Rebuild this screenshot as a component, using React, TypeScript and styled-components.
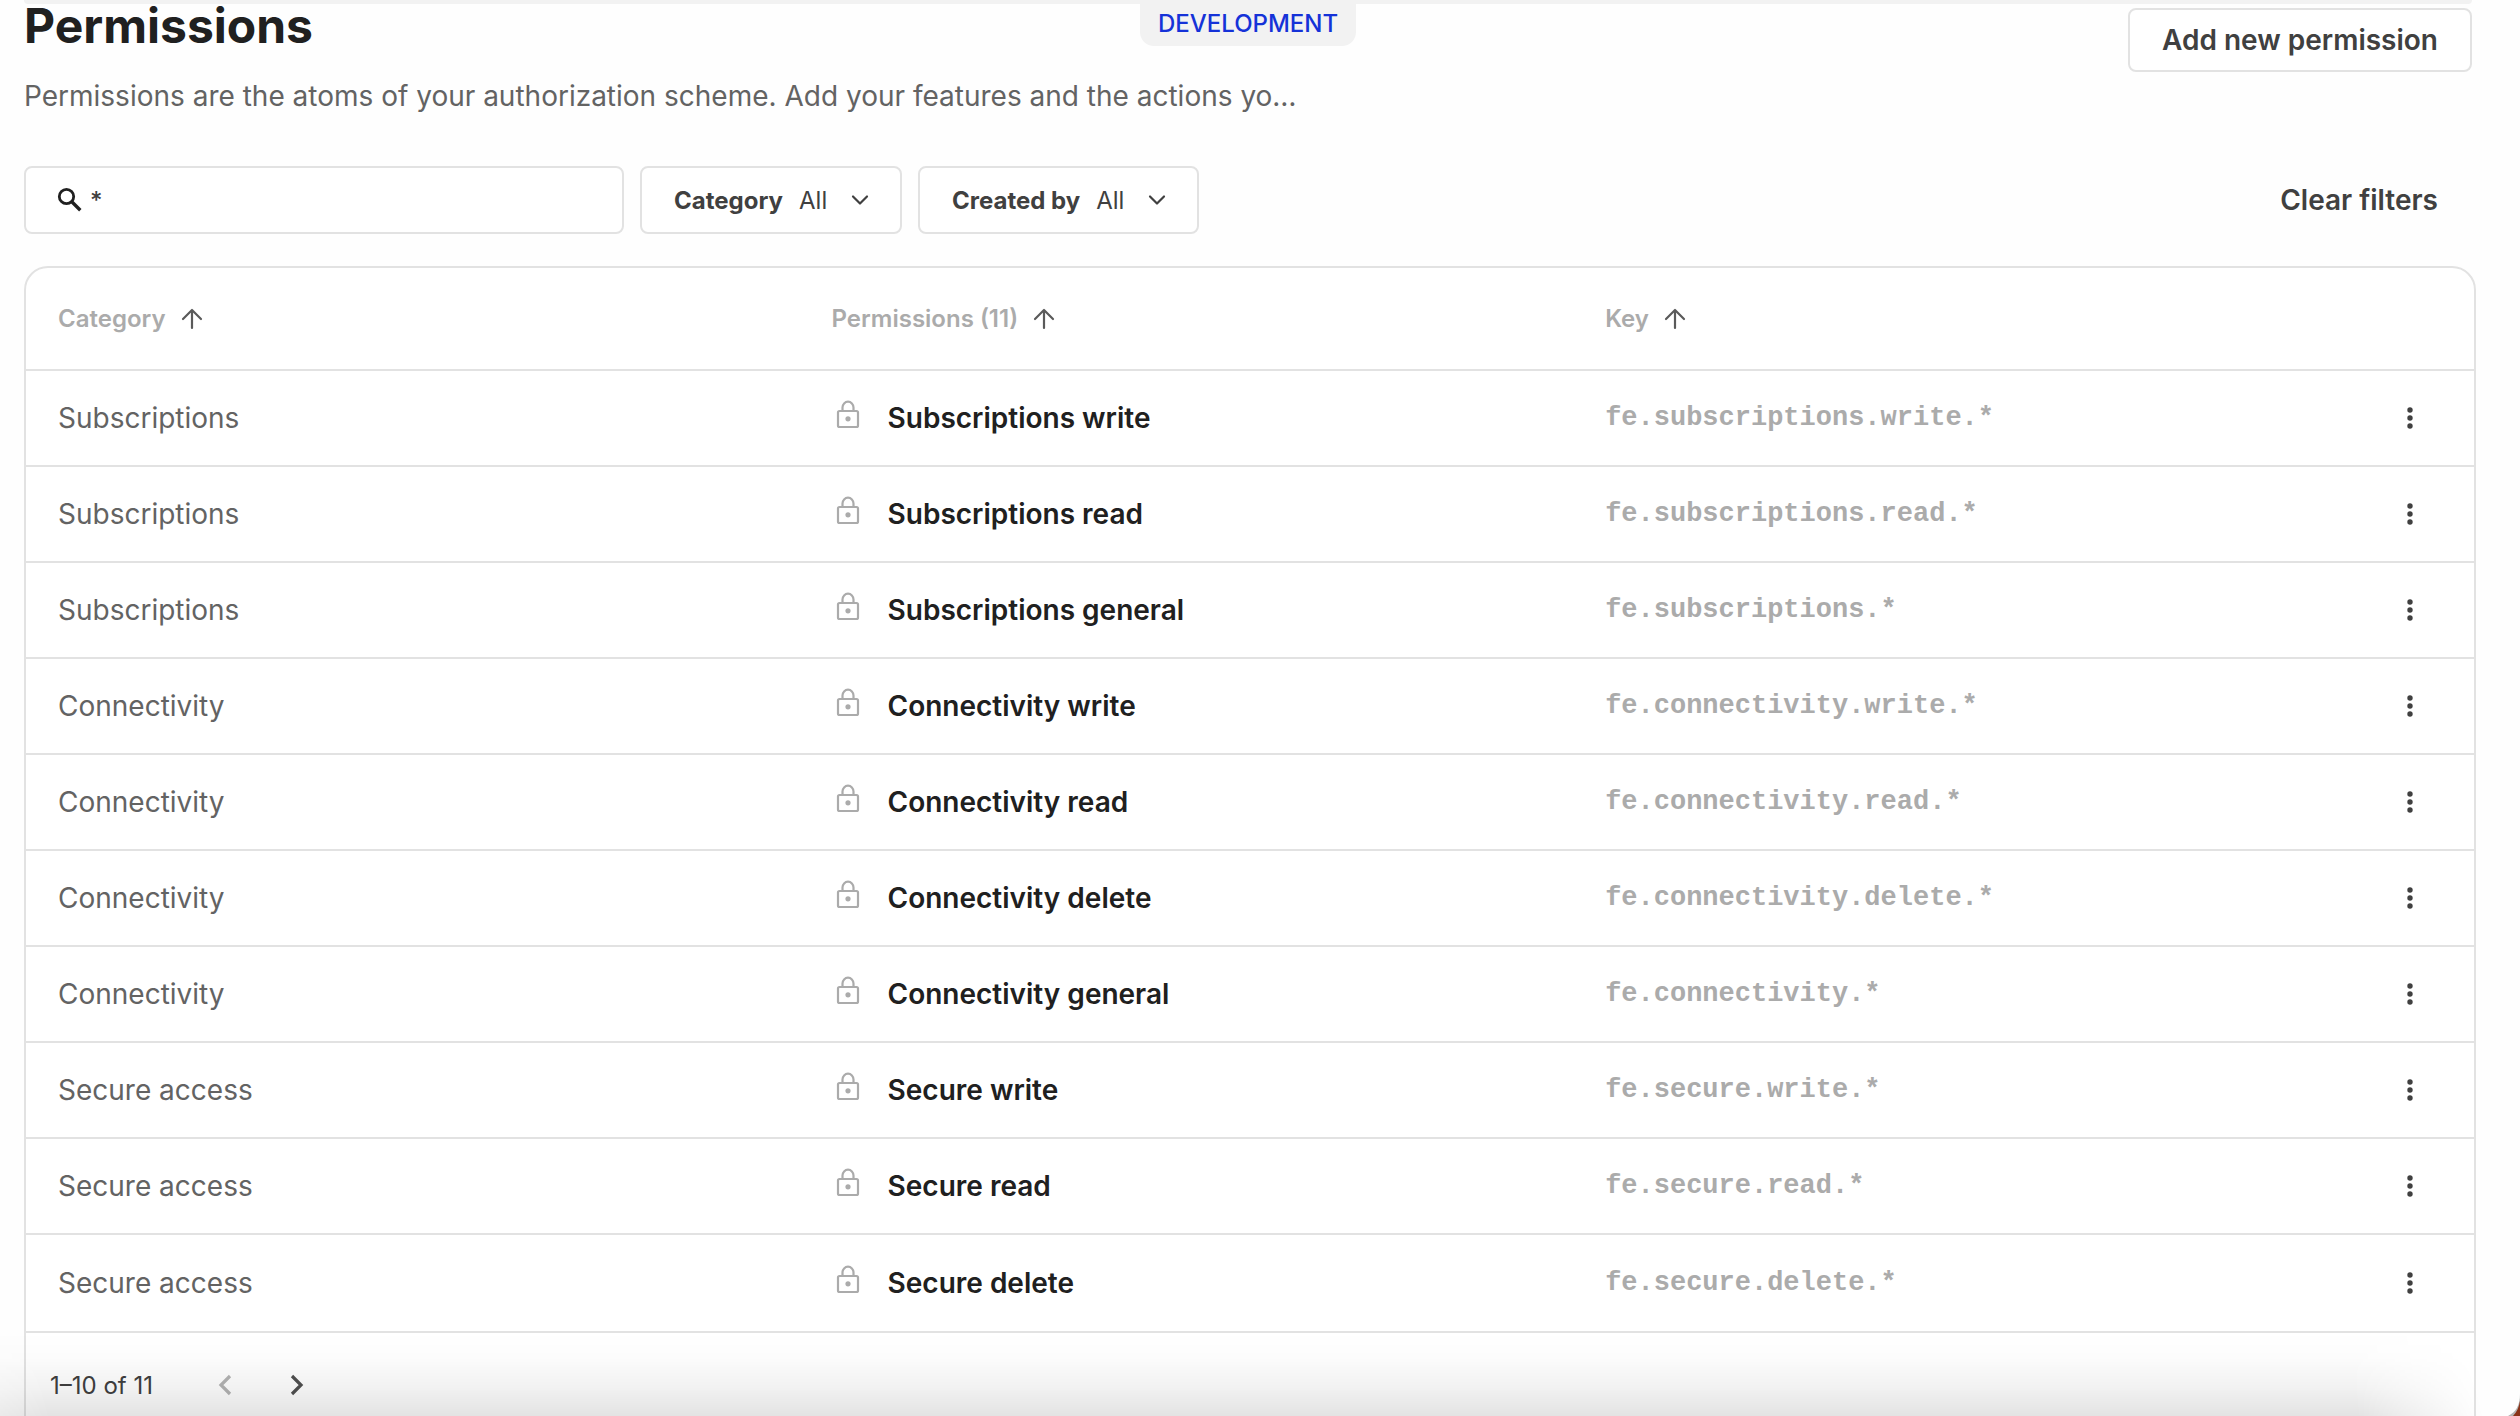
import React, { useState } from "react";
import styled, { createGlobalStyle } from "styled-components";

const Global = createGlobalStyle`
  *, *::before, *::after { box-sizing: border-box; }
  body { margin: 0; background: #fff; overflow: hidden; }
  body, button, input, select { font-family: Inter, "Open Sans", sans-serif; }
  button { cursor: pointer; }
`;

const Page = styled.main`
  position: relative;
  height: 100vh;
  overflow: hidden;
  background: #fefefe;
  padding: 0 44px 0 24px;
`;
const TopBar = styled.div`
  height: 4px;
  margin-right: 4px;
  background: #f2f2f2;
  border-radius: 0 0 8px 8px;
`;
const Environment = styled.div`
  position: absolute;
  top: 0;
  left: 1140px;
  padding: 10px 18px 8px;
  border-radius: 0 0 14px 14px;
  background: #f2f2f2;
  color: #1532d8;
  font-size: 24px;
  line-height: 28px;
  font-weight: 500;
`;
const Header = styled.header`
  display: flex;
  justify-content: space-between;
  align-items: flex-start;
  padding-right: 4px;
`;
const Intro = styled.div`
  display: flex;
  flex-direction: column;
  gap: 24px;
`;
const Title = styled.h1`
  margin: -4px 0 0;
  font-size: 48px;
  line-height: 52px;
  font-weight: 700;
  color: #202020;
`;
const Subtitle = styled.p`
  margin: 0;
  font-size: 28px;
  line-height: 40px;
  color: #636363;
`;
const OutlineButton = styled.button`
  height: 64px;
  margin-top: 4px;
  padding: 0 32px;
  border: 2px solid #e2e2e2;
  border-radius: 8px;
  background: #fff;
  color: #404040;
  font-size: 28px;
  font-weight: 600;
`;
const TextButton = styled.button`
  margin-left: auto;
  padding: 12px 38px;
  border: 0;
  background: none;
  color: #404040;
  font-size: 28px;
  font-weight: 600;
`;
const Filters = styled.div`
  display: flex;
  align-items: center;
  gap: 16px;
  margin-top: 50px;
`;
const Field = styled.label`
  display: flex;
  align-items: center;
  height: 68px;
  border: 2px solid #e2e2e2;
  border-radius: 8px;
  background: #fff;
  color: #404040;
  font-size: 24px;
`;
const SearchField = styled(Field)`
  width: 600px;
  gap: 6px;
  padding: 0 30px;
`;
const SearchInput = styled.input`
  flex: 1;
  min-width: 0;
  border: 0;
  outline: 0;
  padding: 0;
  background: none;
  color: #404040;
  font-size: 24px;
  font-weight: 500;
`;
const SelectField = styled(Field)`
  gap: 16px;
  padding: 0 28px 0 32px;
`;
const FieldName = styled.span`
  font-weight: 700;
`;
const Select = styled.select`
  appearance: none;
  border: 0;
  outline: 0;
  padding: 0 4px 0 0;
  background: none;
  color: #404040;
  font-size: 24px;
`;
const Card = styled.section`
  margin-top: 32px;
  border: 2px solid #e2e2e2;
  border-radius: 24px;
  background: #fff;
`;
const Table = styled.table`
  width: 100%;
  table-layout: fixed;
  border-collapse: collapse;
`;
const Col = styled.col<{ $share?: string }>`
  width: ${(p) => p.$share ?? "auto"};
`;
const HeadCell = styled.th`
  height: 102px;
  padding: 0 32px;
  border-bottom: 2px solid #e2e2e2;
  text-align: left;
`;
const SortButton = styled.button`
  display: flex;
  align-items: center;
  gap: 14px;
  border: 0;
  padding: 0;
  background: none;
  color: #ababab;
  font-size: 24px;
  font-weight: 600;
`;
const Row = styled.tr`
  height: 96px;
  &:last-child { height: 98px; }
`;
const Cell = styled.td`
  padding: 0 32px;
  border-bottom: 2px solid #e2e2e2;
  font-size: 28px;
  line-height: 40px;
  color: #636363;
`;
const KeyCell = styled(Cell)`
  font-family: "Liberation Mono", monospace;
  font-size: 27px;
  font-weight: 700;
  color: #ababab;
`;
const MenuCell = styled(Cell)`
  padding: 0 40px;
`;
const Name = styled.div`
  display: flex;
  align-items: center;
  gap: 24px;
  font-weight: 600;
  color: #202020;
`;
const LockIcon = styled.svg`
  width: 32px;
  height: 32px;
  margin-bottom: 8px;
`;
const IconButton = styled.button`
  display: grid;
  place-items: center;
  width: 48px;
  height: 48px;
  padding: 0;
  border: 0;
  background: none;
  &:disabled { opacity: 0.45; }
`;
const Pager = styled.footer`
  display: flex;
  align-items: center;
  height: 104px;
  padding-left: 24px;
  color: #404040;
  font-size: 24px;
`;
const Range = styled.span`
  margin-right: 48px;
`;
const PagerButtons = styled.div`
  display: flex;
  gap: 24px;
`;
const BottomShade = styled.div`
  position: absolute;
  left: 0;
  right: 0;
  bottom: 0;
  height: 84px;
  pointer-events: none;
  background: linear-gradient(to bottom, rgba(0,0,0,0), rgba(0,0,0,0.012) 30%, rgba(0,0,0,0.05) 65%, rgba(0,0,0,0.11));
  mask-image: linear-gradient(80deg, rgba(0,0,0,0.7) 0, #000 2%, #000 93%, transparent 98%);
`;
const Corner = styled.svg`
  position: absolute;
  right: 0;
  bottom: 0;
  width: 24px;
  height: 24px;
`;

const ArrowUp = () => (
  <svg width="24" height="24" viewBox="0 0 24 24" fill="none" stroke="#5a5a5a" strokeWidth="2.2" strokeLinecap="round" strokeLinejoin="round" aria-hidden="true">
    <path d="M12 21V3M3 12l9-9 9 9" />
  </svg>
);
const Chevron = () => (
  <svg width="24" height="24" viewBox="0 0 24 24" fill="none" stroke="#404040" strokeWidth="2.2" strokeLinecap="round" strokeLinejoin="round" aria-hidden="true">
    <path d="M5 8.500l7 7 7-7" />
  </svg>
);
const Lock = () => (
  <LockIcon viewBox="0 0 32 32" fill="none" stroke="#ababab" strokeWidth="2.2" strokeLinejoin="round" aria-hidden="true">
    <rect x="6" y="13" width="20" height="16" rx="1.500" />
    <path d="M10.500 13V9.500a5.500 5.800 0 0 1 11 0v3.500" />
    <circle cx="16" cy="20.800" r="2.600" fill="#ababab" stroke="none" />
  </LockIcon>
);

const groups = [
  { category: "Subscriptions", name: "Subscriptions", key: "fe.subscriptions", actions: ["write", "read", "general"] },
  { category: "Connectivity", name: "Connectivity", key: "fe.connectivity", actions: ["write", "read", "delete", "general"] },
  { category: "Secure access", name: "Secure", key: "fe.secure", actions: ["write", "read", "delete"] },
];
const permissions = groups.flatMap((g) =>
  g.actions.map((a) => ({
    category: g.category,
    name: `${g.name} ${a}`,
    key: a === "general" ? `${g.key}.*` : `${g.key}.${a}.*`,
  })),
);
const columns = ["Category", "Permissions (11)", "Key"];
const filters = ["Category", "Created by"];

export default function App() {
  const [query, setQuery] = useState("*");
  return (
    <>
      <Global />
      <Page>
        <TopBar />
        <Environment>DEVELOPMENT</Environment>
        <Header>
          <Intro>
            <Title>Permissions</Title>
            <Subtitle>Permissions are the atoms of your authorization scheme. Add your features and the actions yo…</Subtitle>
          </Intro>
          <OutlineButton type="button">Add new permission</OutlineButton>
        </Header>
        <Filters>
          <SearchField>
            <svg width="28" height="28" viewBox="0 0 28 28" fill="none" stroke="#202020" strokeWidth="2.8" aria-hidden="true">
              <circle cx="10.500" cy="10.500" r="7.200" />
              <path d="M15.800 15.800l8.500 8.500" strokeWidth="3.4" />
            </svg>
            <SearchInput aria-label="Search permissions" value={query} onChange={(e) => setQuery(e.target.value)} />
          </SearchField>
          {filters.map((f) => (
            <SelectField key={f}>
              <FieldName>{f}</FieldName>
              <Select defaultValue="All">
                <option>All</option>
              </Select>
              <Chevron />
            </SelectField>
          ))}
          <TextButton type="button">Clear filters</TextButton>
        </Filters>
        <Card>
          <Table>
            <colgroup>
              <Col $share="31.6%" />
              <Col $share="31.6%" />
              <Col />
              <Col $share="128px" />
            </colgroup>
            <thead>
              <tr>
                {columns.map((c) => (
                  <HeadCell key={c} scope="col">
                    <SortButton type="button">
                      {c}
                      <ArrowUp />
                    </SortButton>
                  </HeadCell>
                ))}
                <HeadCell scope="col" aria-label="Actions" />
              </tr>
            </thead>
            <tbody>
              {permissions.map((p) => (
                <Row key={p.key}>
                  <Cell>{p.category}</Cell>
                  <Cell>
                    <Name>
                      <Lock />
                      {p.name}
                    </Name>
                  </Cell>
                  <KeyCell>{p.key}</KeyCell>
                  <MenuCell>
                    <IconButton type="button" aria-label={`Actions for ${p.name}`}>
                      <svg width="24" height="24" viewBox="0 0 24 24" fill="#404040" aria-hidden="true">
                        <circle cx="12" cy="4" r="2.700" />
                        <circle cx="12" cy="12" r="2.700" />
                        <circle cx="12" cy="20" r="2.700" />
                      </svg>
                    </IconButton>
                  </MenuCell>
                </Row>
              ))}
            </tbody>
          </Table>
          <Pager>
            <Range>1–10 of 11</Range>
            <PagerButtons>
              <IconButton type="button" aria-label="Previous page" disabled>
                <svg width="24" height="24" viewBox="0 0 24 24" fill="none" stroke="#5a5a5a" strokeWidth="3.2" aria-hidden="true">
                  <path d="M17 3l-9 9 9 9" />
                </svg>
              </IconButton>
              <IconButton type="button" aria-label="Next page">
                <svg width="24" height="24" viewBox="0 0 24 24" fill="none" stroke="#505050" strokeWidth="3.2" aria-hidden="true">
                  <path d="M7 3l9 9-9 9" />
                </svg>
              </IconButton>
            </PagerButtons>
          </Pager>
        </Card>
        <BottomShade />
        <Corner viewBox="0 0 24 24" aria-hidden="true">
          <path d="M24 2C24 13 20 20 12 24H24Z" fill="#b4b4b4" />
          <path d="M24 9C23 15 21 20 17 24H24Z" fill="#8a3318" />
        </Corner>
      </Page>
    </>
  );
}
